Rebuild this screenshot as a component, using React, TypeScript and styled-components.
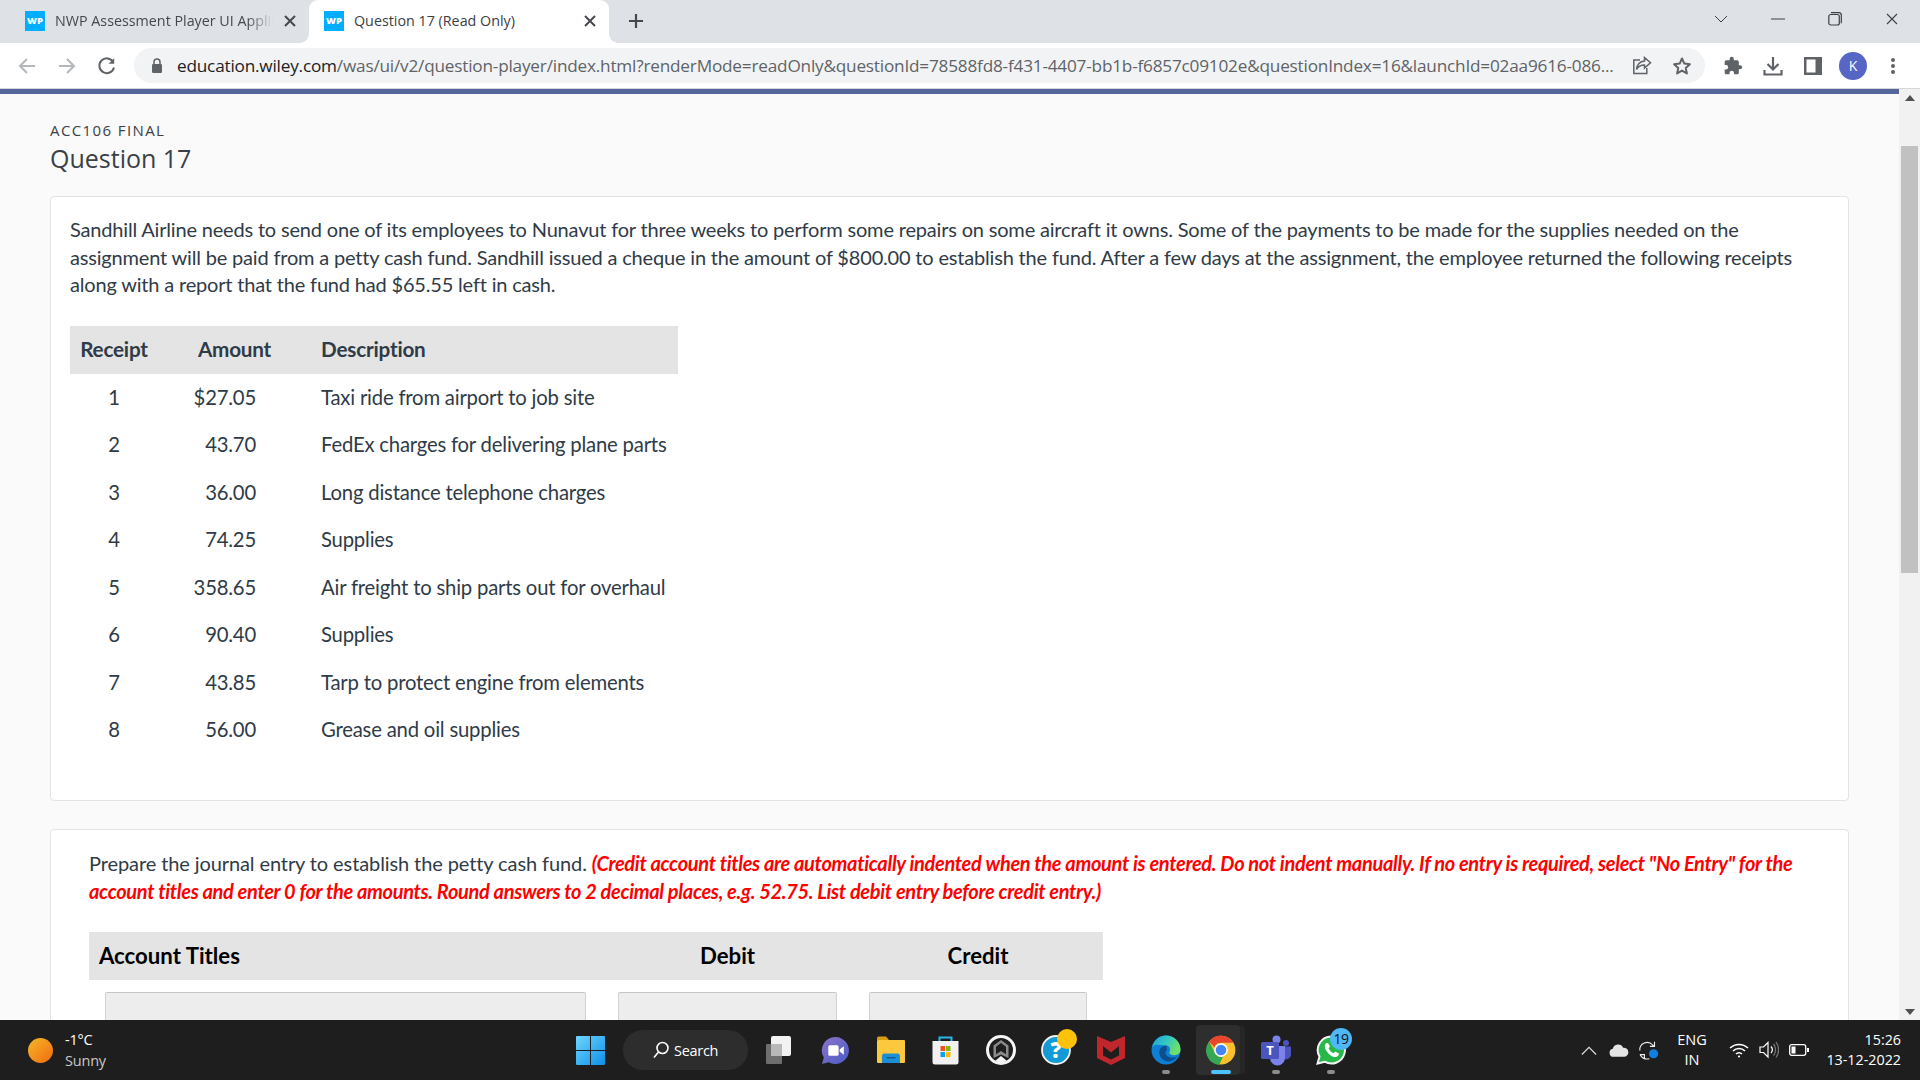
import React from "react";
import styled, { createGlobalStyle } from "styled-components";

const Global = createGlobalStyle`
  html, body { margin: 0; padding: 0; height: 100%; overflow: hidden; }
  #root { height: 100%; }
  * { box-sizing: border-box; }
`;

const Screen = styled.div`
  width: 1920px; height: 1080px; display: flex; flex-direction: column; overflow: hidden;
  font-family: "Lato", sans-serif; background: #fff;
`;

/* ---------- browser chrome ---------- */
const TabStrip = styled.div`
  height: 43px; flex: none; background: #dee1e6; display: flex; align-items: stretch; padding-left: 8px;
`;
const Tab = styled.div<{ $active?: boolean }>`
  width: ${p => (p.$active ? "300px" : "301px")}; flex: none; display: flex; align-items: center; position: relative;
  padding: 0 0 2px ${p => (p.$active ? "15px" : "17px")};
  background: ${p => (p.$active ? "#fff" : "transparent")};
  border-radius: 9px 9px 0 0;
  font: 14.3px "Open Sans", sans-serif; color: ${p => (p.$active ? "#3c4043" : "#45494d")};
  ${p => p.$active && `
    &::before, &::after {
      content: ""; position: absolute; bottom: 0; width: 9px; height: 9px;
    }
    &::before { left: -9px; background: radial-gradient(circle at 0 0, #dee1e6 8.5px, #fff 9px); }
    &::after { right: -9px; background: radial-gradient(circle at 100% 0, #dee1e6 8.5px, #fff 9px); }
  `}
`;
const Favicon = styled.span`
  width: 20px; height: 20px; background: #00aeff; color: #fff; flex: none;
  font: 800 9.5px/20px "Open Sans", sans-serif; text-align: center; margin-right: 10px;
`;
const TabTitle = styled.span`
  flex: 1; min-width: 0; white-space: nowrap; overflow: hidden;
`;
const FadedTitle = styled(TabTitle)`
  -webkit-mask-image: linear-gradient(to right, #000 88%, transparent 100%);
  mask-image: linear-gradient(to right, #000 88%, transparent 100%);
`;
const TabClose = styled.span`
  width: 14px; height: 14px; display: flex; margin-left: 10px; margin-right: 12px; color: #45494d; flex: none;
`;
const NewTab = styled.span`
  width: 20px; height: 20px; margin: 0 0 2px 17px; align-self: center; color: #45494d; display: flex;
`;
const WinControls = styled.div`
  margin-left: auto; align-self: flex-start; display: flex; align-items: center; height: 37px; color: #3c4043;
`;
const WinBtn = styled.span`
  width: 57px; display: flex; justify-content: center; align-items: center;
`;

const Toolbar = styled.div`
  height: 45px; flex: none; background: #fff; display: flex; align-items: center; padding-left: 17px;
`;
const NavBtn = styled.span<{ $w?: number }>`
  width: ${p => p.$w ?? 40}px; display: flex; align-items: center; justify-content: flex-start; flex: none;
`;
const Omnibox = styled.div`
  width: 1571px; height: 35px; border-radius: 18px; background: #f1f3f4; display: flex; align-items: center;
  padding-left: 17px; flex: none;
`;
const Url = styled.span`
  font: 17.2px "Open Sans", sans-serif; letter-spacing: -0.2px; color: #5f6368; white-space: nowrap; margin-left: 14px;
  width: 1445px; flex: none;
`;
const Domain = styled.span`
  color: #202124;
`;
const ToolIcons = styled.div`
  display: flex; align-items: center; margin-left: 8px;
`;
const ToolIcon = styled.span`
  width: 40px; display: flex; justify-content: center; align-items: center; flex: none;
`;
const Avatar = styled.span`
  width: 28px; height: 28px; border-radius: 50%; background: #5566c4; color: #fff; text-align: center;
  font: 14px/28px "Open Sans", sans-serif;
`;

/* ---------- page ---------- */
const Body = styled.div`
  flex: 1; min-height: 0; display: flex; border-top: 1px solid #d5d6d8; overflow: hidden;
`;
const Viewport = styled.div`
  flex: 1; min-width: 0; background: #fafafa; border-top: 5px solid #54669c; overflow: hidden; padding: 27px 50px 0;
`;
const Eyebrow = styled.div`
  font: 15px/18px "Open Sans", sans-serif; letter-spacing: 1.4px; color: #3a4048;
`;
const Heading = styled.h1`
  margin: 2px 0 0; font: 400 25px/34px "Open Sans", sans-serif; color: #3a4048;
`;
const Card = styled.section`
  background: #fff; border: 1px solid #e1e3e5; border-radius: 4px; margin-bottom: 28px;
`;
const StoryCard = styled(Card)`
  height: 605px; margin-top: 21px; padding: 19px 19px 0;
`;
const Para = styled.p`
  margin: 0; font: 400 20px/27.7px "Lato", sans-serif; letter-spacing: -0.18px; color: #2f3b47;
`;
const QuestionPara = styled(Para)`
  letter-spacing: -0.1px;
`;
const Red = styled.em`
  color: #f00; font-weight: 700; letter-spacing: -0.32px;
`;
const ReceiptTable = styled.table`
  border-collapse: collapse; margin-top: 27px; width: 608px; table-layout: fixed;
  font: 400 20.3px "Lato", sans-serif; letter-spacing: -0.2px; color: #2f3b47;
`;
const RH = styled.th<{ $w: number; $left?: boolean }>`
  width: ${p => p.$w}px; height: 48px; background: #e4e4e4; font-weight: 700; font-size: 20.7px; color: #2f3b47;
  text-align: ${p => (p.$left ? "left" : "center")}; padding: 0 0 2px ${p => (p.$left ? "10px" : "0")};
`;
const RC = styled.td`
  height: 47.5px; text-align: center; padding: 0 0 2px;
`;
const AC = styled.td`
  text-align: right; padding: 0 55px 2px 0;
`;
const DC = styled.td`
  text-align: left; padding: 0 0 2px 10px; white-space: nowrap;
`;
const EntryCard = styled(Card)`
  height: 400px; padding: 20px 38px 0;
`;
const EntryTable = styled.table`
  border-collapse: collapse; table-layout: fixed; width: 1014px; margin-top: 26.6px;
  font: 700 22.2px "Lato", sans-serif; color: #000;
`;
const EH = styled.th<{ $w: number; $left?: boolean }>`
  width: ${p => p.$w}px; height: 48px; background: #e4e4e4;
  text-align: ${p => (p.$left ? "left" : "center")}; padding: 0 0 2px ${p => (p.$left ? "10px" : "0")};
`;
const EC = styled.td`
  padding: 12px 16px;
`;
const Field = styled.div`
  height: 44px; background: #ededed; border: 1px solid #d2d2d2; border-top-color: #c6c6c6; border-radius: 2px;
`;

const Scrollbar = styled.div`
  width: 21px; flex: none; background: #f1f1f1; display: flex; flex-direction: column; align-items: center;
`;
const ScrollArrow = styled.span`
  height: 17px; flex: none; display: flex; align-items: center; justify-content: center;
`;
const ScrollTrack = styled.div`
  flex: 1; width: 100%; padding-top: 40px;
`;
const ScrollThumb = styled.div`
  height: 427px; background: #c1c1c1; margin: 0 2px;
`;

/* ---------- taskbar ---------- */
const Taskbar = styled.div`
  height: 60px; flex: none; background: #1e1e1e; display: flex; align-items: center; color: #fff;
`;
const Weather = styled.div`
  width: 576px; flex: none; display: flex; align-items: center; padding-left: 28px; font: 14.5px/21px "Open Sans", sans-serif;
`;
const Sun = styled.span`
  width: 25px; height: 25px; border-radius: 50%; background: linear-gradient(135deg, #f5b829, #f06a10); margin-right: 12px; flex: none;
`;
const WeatherText = styled.div`
  display: flex; flex-direction: column; letter-spacing: -0.2px; color: #c8c8c8;
`;
const Temp = styled.span`
  color: #fff;
`;
const SearchPill = styled.div`
  width: 125px; height: 40px; border-radius: 20px; background: #2d2d2d; margin: 0 5px 0 18px; display: flex; align-items: center;
  padding-left: 29px; gap: 4px; font: 14.5px "Open Sans", sans-serif; color: #fff; letter-spacing: -0.3px; flex: none;
`;
const TaskIcon = styled.span`
  width: 55px; height: 60px; display: flex; align-items: center; justify-content: center; position: relative; flex: none;
`;
const ChromeTile = styled(TaskIcon)`
  &::before {
    content: ""; position: absolute; left: 3px; top: 5px; width: 44px; height: 50px; background: #2e2e2e; border-radius: 4px;
    box-shadow: 6px 0 0 -1px #262626;
  }
  & > svg { position: relative; }
`;
const RunDot = styled.span<{ $active?: boolean }>`
  position: absolute; bottom: 6px; left: 50%; transform: translateX(-50%);
  width: ${p => (p.$active ? "20px" : "8px")}; height: 4px; border-radius: 2px;
  background: ${p => (p.$active ? "#4cc2ff" : "#8c8c8c")};
`;
const Badge = styled.span`
  position: absolute; top: 8px; right: 6px; width: 22px; height: 22px; border-radius: 50%; background: #4db8f5; color: #111;
  font: 14px/22px "Open Sans", sans-serif; text-align: center; letter-spacing: -0.5px;
`;
const Tray = styled.div`
  margin-left: auto; display: flex; align-items: center; height: 60px; padding-right: 19px;
`;
const TrayIcon = styled.span`
  width: 30px; display: flex; align-items: center; justify-content: center; flex: none;
`;
const Lang = styled.div`
  width: 52px; text-align: center; font: 14.5px/20.5px "Open Sans", sans-serif; color: #fff; margin: 0 6px 0 2px;
`;
const Clock = styled.div`
  margin-left: 11px; text-align: right; font: 14.3px/20.5px "Open Sans", sans-serif; color: #fff; width: 76px; white-space: nowrap;
`;

/* ---------- icons ---------- */
const X = ({ s = 14, w = 2 }: { s?: number; w?: number }) => (
  <svg width={s} height={s} viewBox="0 0 14 14" stroke="currentColor" strokeWidth={w} fill="none"><path d="M2 2l10 10M12 2L2 12" /></svg>
);
const gray = "#5f6368";

const Arrow = ({ flip }: { flip?: boolean }) => (
  <svg width="20" height="20" viewBox="0 0 20 20" fill="none" stroke="#b4b7bb" strokeWidth="2" transform={flip ? "scale(-1 1)" : undefined}>
    <path d="M18 10H3M10 3l-7 7 7 7" />
  </svg>
);
const Reload = () => (
  <svg width="20" height="20" viewBox="0 0 20 20" fill="none" stroke={gray} strokeWidth="2">
    <path d="M16.2 6A7.4 7.4 0 1 0 17 11.5" /><path d="M17.2 2.2v5.600h-5.600z" fill={gray} stroke="none" />
  </svg>
);
const LockIcon = () => (
  <svg width="12" height="16" viewBox="0 0 12 16" fill={gray}>
    <rect x="1" y="6" width="10" height="9" rx="1.2" /><path d="M3 6.500V4a3 3 0 0 1 6 0v2.500" fill="none" stroke={gray} strokeWidth="1.5" />
  </svg>
);
const ShareIcon = () => (
  <svg width="20" height="19" viewBox="0 0 20 19" fill="none" stroke={gray} strokeWidth="1.5">
    <path d="M8 4H1.800v13.500h13V12" /><path d="M12.500 1.500l6 5.200-6 5.300V9c-3.500 0-6 1-8 4.500C5 9 7.500 5.500 12.500 5z" />
  </svg>
);
const StarIcon = () => (
  <svg width="20" height="20" viewBox="0 0 20 20" fill="none" stroke={gray} strokeWidth="2" strokeLinejoin="round">
    <path d="M10 2.500l2.300 5.100 5.600.6-4.200 3.700 1.200 5.500-4.900-2.800-4.900 2.800 1.200-5.500L2.100 8.200l5.600-.6z" />
  </svg>
);
const Puzzle = () => (
  <svg width="20" height="20" viewBox="0 0 24 24" fill={gray}>
    <path d="M20.500 11H19V7a2 2 0 0 0-2-2h-4V3.500a2.500 2.500 0 0 0-5 0V5H4a2 2 0 0 0-2 2v3.800h1.500a2.700 2.700 0 0 1 0 5.400H2V20a2 2 0 0 0 2 2h3.800v-1.500a2.700 2.700 0 0 1 5.400 0V22H17a2 2 0 0 0 2-2v-4h1.500a2.500 2.500 0 0 0 0-5z" />
  </svg>
);
const Download = () => (
  <svg width="20" height="20" viewBox="0 0 20 20" fill="none" stroke={gray} strokeWidth="2.2">
    <path d="M10 1v12M4.500 8l5.500 5.500L15.500 8" /><path d="M1.500 14v4.500h17V14" />
  </svg>
);
const SidePanel = () => (
  <svg width="18" height="18" viewBox="0 0 18 18"><rect width="18" height="18" fill={gray} /><rect x="2.500" y="2.500" width="9" height="13" fill="#fff" /></svg>
);
const Kebab = () => (
  <svg width="6" height="18" viewBox="0 0 6 18" fill={gray}><circle cx="3" cy="3" r="2" /><circle cx="3" cy="9" r="2" /><circle cx="3" cy="15" r="2" /></svg>
);

const WinLogo = () => (
  <svg width="29" height="29" viewBox="0 0 29 29">
    <defs><linearGradient id="wl" x1="0" y1="0" x2="1" y2="1"><stop offset="0" stopColor="#6fd6ff" /><stop offset="1" stopColor="#0d8fe8" /></linearGradient></defs>
    <path d="M0 1a1 1 0 0 1 1-1h13v14H0zM15 0h13a1 1 0 0 1 1 1v13H15zM0 15h14v14H1a1 1 0 0 1-1-1zM15 15h14v13a1 1 0 0 1-1 1H15z" fill="url(#wl)" />
  </svg>
);
const SearchGlyph = () => (
  <svg width="18" height="18" viewBox="0 0 18 18" fill="none" stroke="#fff" strokeWidth="1.6"><circle cx="10.500" cy="7" r="5.500" /><path d="M6.500 11l-4.500 5.500" /></svg>
);
const TaskView = () => (
  <svg width="30" height="29" viewBox="0 0 30 29"><rect x="0" y="8" width="16" height="20" fill="#6e6e6e" rx="1" /><rect x="5" y="0" width="20" height="20" rx="2" fill="#f2f2f2" /><rect x="5" y="8" width="11" height="12" fill="#b8b8b8" /></svg>
);
const Chat = () => (
  <svg width="29" height="29" viewBox="0 0 28 28">
    <defs><linearGradient id="ch" x1="0" y1="0" x2="1" y2="1"><stop offset="0" stopColor="#8c74c9" /><stop offset="1" stopColor="#4a5bc4" /></linearGradient></defs>
    <path d="M14 1a13 13 0 1 1-6.500 24.300L1 27l1.700-6.300A13 13 0 0 1 14 1z" fill="url(#ch)" />
    <rect x="7" y="9" width="10" height="10" rx="1.5" fill="#fff" /><path d="M18 13l4-3v8l-4-3z" fill="#fff" />
  </svg>
);
const Folder = () => (
  <svg width="30" height="28" viewBox="0 0 30 28">
    <path d="M1 2a1.500 1.500 0 0 1 1.500-1.500H10l3 3.500H1z" fill="#d79e14" /><rect x="1" y="4" width="28" height="23" rx="1" fill="#fcc83e" />
    <path d="M6 27v-7a2.500 2.500 0 0 1 2.500-2.500h13A2.500 2.500 0 0 1 24 20v7z" fill="#1a8fd6" /><rect x="10.500" y="21" width="9" height="1.500" fill="#0c5d95" />
  </svg>
);
const Store = () => (
  <svg width="29" height="30" viewBox="0 0 28 30">
    <path d="M8 6V2.500h12V6" fill="none" stroke="#2bb6e8" strokeWidth="2" />
    <path d="M1 6h26v21a2.500 2.500 0 0 1-2.500 2.500h-21A2.500 2.500 0 0 1 1 27z" fill="#f1f1f1" />
    <rect x="9" y="11" width="4.500" height="5" fill="#f25022" /><rect x="14.500" y="11" width="4.500" height="5" fill="#7fba00" />
    <rect x="9" y="17" width="4.500" height="5" fill="#00a4ef" /><rect x="14.500" y="17" width="4.500" height="5" fill="#ffb900" />
  </svg>
);
const Arch = () => (
  <svg width="30" height="30" viewBox="0 0 30 30">
    <circle cx="15" cy="15" r="13.500" fill="#1e1e1e" stroke="#f5f5f5" strokeWidth="3" />
    <path d="M7.500 10.500L15 5l7.500 5.500v12.500L15 19.500 7.500 23z" fill="#8a8a8a" />
    <path d="M10 11.800L15 8l5 3.800v7.400L15 16l-5 3.200z" fill="#1e1e1e" />
    <path d="M9 26l6-5 6 5-6 2z" fill="#f5f5f5" />
  </svg>
);
const Help = () => (
  <svg width="42" height="42" viewBox="0 0 42 42">
    <circle cx="21" cy="21" r="14" fill="#129ad6" stroke="#f3f3f3" strokeWidth="1.800" />
    <text x="21" y="29" textAnchor="middle" fontFamily="Open Sans" fontWeight="800" fontSize="22" fill="#fff">?</text>
    <circle cx="32" cy="10" r="10" fill="#fdc20a" />
  </svg>
);
const McAfee = () => (
  <svg width="28" height="30" viewBox="0 0 28 30">
    <path d="M0 1l14 6 14-6v22l-14 7-14-7z" fill="#c0272d" /><path d="M6 11l8 6.500 8-6.500v9.500L14 24.500 6 20.500z" fill="#1e1e1e" />
  </svg>
);
const Edge = () => (
  <svg width="30" height="30" viewBox="0 0 29 29">
    <defs>
      <linearGradient id="eg" x1="0" y1="0" x2="1" y2=".5"><stop offset="0" stopColor="#1aa0e0" /><stop offset=".55" stopColor="#36c8c0" /><stop offset="1" stopColor="#6fe264" /></linearGradient>
    </defs>
    <circle cx="14.500" cy="14.500" r="14" fill="#0e7fd3" />
    <path d="M1 12C3 4 9 .5 14.500 .5 22 .5 28.500 6 28.500 14c0 3-2 5.500-6 5.500-3 0-5-1-5-2.500 2-2 1-7-3.500-7C8 10 4 8 1 12z" fill="url(#eg)" />
    <path d="M14.500 10.500c-4 0-6.500 3-6.500 6.500 0 5 5 9.500 10 8.500 3.500-.7 6-2.500 8-5.500-2 1.500-5 2.500-8 1.500-3-1-4.500-3-4-5 .3-1 .8-1.500 1.500-2-.5-2.500-.5-4-1-4.500z" fill="#0b4f8e" />
  </svg>
);
const ChromeLogo = () => (
  <svg width="30" height="30" viewBox="0 0 48 48">
    <circle cx="24" cy="24" r="23" fill="#fbc02d" />
    <path d="M24 1a23 23 0 0 1 19.900 11.500H24a11.500 11.500 0 0 0-10.500 7L5.200 10.600A23 23 0 0 1 24 1z" fill="#e8452c" />
    <path d="M5.200 10.600l9.600 19A11.500 11.500 0 0 0 27 35l-6 12.800A23 23 0 0 1 5.200 10.600z" fill="#34a853" />
    <circle cx="24" cy="24" r="11" fill="#fff" /><circle cx="24" cy="24" r="8.500" fill="#4285f4" />
  </svg>
);
const Teams = () => (
  <svg width="30" height="31" viewBox="0 0 30 31">
    <circle cx="25" cy="8" r="3" fill="#4b53bc" /><circle cx="15.500" cy="4.500" r="4" fill="#7b83eb" />
    <path d="M20 11.500h10v8a5 5 0 0 1-7 4.500z" fill="#4b53bc" /><path d="M9 11h15v12a7.500 7.500 0 0 1-15 0z" fill="#7b83eb" />
    <rect x="0" y="7" width="18" height="17" rx="1.500" fill="#4c54bd" />
    <text x="9" y="20" textAnchor="middle" fontFamily="Open Sans" fontWeight="700" fontSize="13" fill="#fff">T</text>
  </svg>
);
const WhatsApp = () => (
  <svg width="30" height="30" viewBox="0 0 30 30">
    <path d="M15.500 1.500a13.500 13.500 0 1 1-6.800 25.200L1.500 28.500l2-6.900A13.500 13.500 0 0 1 15.500 1.500z" fill="#26b94a" stroke="#f3f3f3" strokeWidth="2" />
    <path d="M10.500 8c-2 1.500-2.500 4 0 8s6.500 6.500 9.500 6c1.800-.3 3-2 3-3.500l-3.800-2-1.700 1.700c-2-.7-4-2.800-5-5l1.500-1.700L12 8z" fill="#fff" />
  </svg>
);
const Cloud = () => (
  <svg width="20" height="13" viewBox="0 0 22 14" fill="#e4e4e4"><path d="M5 14a4.500 4.500 0 0 1-.8-8.900A6 6 0 0 1 15.500 4 5 5 0 0 1 17 14z" /></svg>
);
const Sync = () => (
  <svg width="22" height="21" viewBox="0 0 24 22" fill="none" stroke="#eee" strokeWidth="1.200">
    <path d="M2 11a8 8 0 0 1 14-6l1.500 1.500M18 1.500v5h-5" /><path d="M2 15.500h5v5M2.500 16c2 3 6 5 10 4" />
    <circle cx="17" cy="14.500" r="5" fill="#0f7fe6" stroke="none" />
  </svg>
);
const Caret = () => (
  <svg width="16" height="9" viewBox="0 0 18 10" fill="none" stroke="#ddd" strokeWidth="1.300"><path d="M1 9.500L9 1.500l8 8" /></svg>
);
const Wifi = () => (
  <svg width="20" height="16" viewBox="0 0 20 16" fill="none" stroke="#fff" strokeWidth="1.500">
    <path d="M1 6a13 13 0 0 1 18 0M4 9a8.500 8.500 0 0 1 12 0M7 12a4 4 0 0 1 6 0" /><circle cx="10" cy="14.500" r="1.100" fill="#fff" stroke="none" />
  </svg>
);
const Volume = () => (
  <svg width="20" height="18" viewBox="0 0 20 18" fill="none" stroke="#fff" strokeWidth="1.200">
    <path d="M1 6v5.500h3.500L9 16V1.500L4.500 6z" /><path d="M12 5.500a5 5 0 0 1 0 6.500" /><path d="M14.500 3a9 9 0 0 1 0 11.500M17 1a13 13 0 0 1 0 15.500" stroke="#777" />
  </svg>
);
const Battery = () => (
  <svg width="20" height="12" viewBox="0 0 20 12" fill="none"><rect x=".7" y=".7" width="16" height="10.600" rx="2" stroke="#fff" strokeWidth="1.300" /><rect x="2.500" y="2.500" width="4" height="7" fill="#fff" /><rect x="18" y="4" width="2" height="4" fill="#fff" /></svg>
);

const receipts: [number, string, string][] = [
  [1, "$27.05", "Taxi ride from airport to job site"],
  [2, "43.70", "FedEx charges for delivering plane parts"],
  [3, "36.00", "Long distance telephone charges"],
  [4, "74.25", "Supplies"],
  [5, "358.65", "Air freight to ship parts out for overhaul"],
  [6, "90.40", "Supplies"],
  [7, "43.85", "Tarp to protect engine from elements"],
  [8, "56.00", "Grease and oil supplies"],
];

export default function App() {
  return (
    <Screen>
      <Global />
      <TabStrip>
        <Tab>
          <Favicon>WP</Favicon>
          <FadedTitle>NWP Assessment Player UI Application</FadedTitle>
          <TabClose><X /></TabClose>
        </Tab>
        <Tab $active>
          <Favicon>WP</Favicon>
          <TabTitle>Question 17 (Read Only)</TabTitle>
          <TabClose><X /></TabClose>
        </Tab>
        <NewTab>
          <svg width="20" height="20" viewBox="0 0 20 20" stroke="currentColor" strokeWidth="2.200"><path d="M10 3v14M3 10h14" /></svg>
        </NewTab>
        <WinControls>
          <WinBtn><svg width="14" height="8" viewBox="0 0 14 8" fill="none" stroke="currentColor"><path d="M1 1l6 6 6-6" /></svg></WinBtn>
          <WinBtn><svg width="14" height="2" viewBox="0 0 14 2" stroke="currentColor"><path d="M0 1h14" /></svg></WinBtn>
          <WinBtn><svg width="14" height="14" viewBox="0 0 14 14" fill="none" stroke="currentColor" strokeWidth="1.200"><rect x=".8" y="2.500" width="10.500" height="10.500" rx="2" /><path d="M3 .7h8a2.500 2.500 0 0 1 2.300 2.500v8" /></svg></WinBtn>
          <WinBtn><X s={14} w={1.100} /></WinBtn>
        </WinControls>
      </TabStrip>
      <Toolbar>
        <NavBtn><Arrow /></NavBtn>
        <NavBtn><Arrow flip /></NavBtn>
        <NavBtn $w={37}><Reload /></NavBtn>
        <Omnibox>
          <LockIcon />
          <Url><Domain>education.wiley.com</Domain>/was/ui/v2/question-player/index.html?renderMode=readOnly&amp;questionId=78588fd8-f431-4407-bb1b-f6857c09102e&amp;questionIndex=16&amp;launchId=02aa9616-086...</Url>
          <ToolIcon><ShareIcon /></ToolIcon>
          <ToolIcon><StarIcon /></ToolIcon>
        </Omnibox>
        <ToolIcons>
          <ToolIcon><Puzzle /></ToolIcon>
          <ToolIcon><Download /></ToolIcon>
          <ToolIcon><SidePanel /></ToolIcon>
          <ToolIcon><Avatar>K</Avatar></ToolIcon>
          <ToolIcon><Kebab /></ToolIcon>
        </ToolIcons>
      </Toolbar>
      <Body>
        <Viewport>
          <Eyebrow>ACC106 FINAL</Eyebrow>
          <Heading>Question 17</Heading>
          <StoryCard>
            <Para>
              Sandhill Airline needs to send one of its employees to Nunavut for three weeks to perform some repairs on some aircraft it owns. Some of the payments to be made for the supplies needed on the assignment will be paid from a petty cash fund. Sandhill issued a cheque in the amount of $800.00 to establish the fund. After a few days at the assignment, the employee returned the following receipts along with a report that the fund had $65.55 left in cash.
            </Para>
            <ReceiptTable>
              <thead>
                <tr><RH $w={88}>Receipt</RH><RH $w={153}>Amount</RH><RH $w={367} $left>Description</RH></tr>
              </thead>
              <tbody>
                {receipts.map(([n, a, d]) => (
                  <tr key={n}><RC>{n}</RC><AC>{a}</AC><DC>{d}</DC></tr>
                ))}
              </tbody>
            </ReceiptTable>
          </StoryCard>
          <EntryCard>
            <QuestionPara>
              Prepare the journal entry to establish the petty cash fund. <Red>(Credit account titles are automatically indented when the amount is entered. Do not indent manually. If no entry is required, select "No Entry" for the account titles and enter 0 for the amounts. Round answers to 2 decimal places, e.g. 52.75. List debit entry before credit entry.)</Red>
            </QuestionPara>
            <EntryTable>
              <thead>
                <tr><EH $w={513} $left>Account Titles</EH><EH $w={251}>Debit</EH><EH $w={250}>Credit</EH></tr>
              </thead>
              <tbody>
                <tr><EC><Field /></EC><EC><Field /></EC><EC><Field /></EC></tr>
              </tbody>
            </EntryTable>
          </EntryCard>
        </Viewport>
        <Scrollbar>
          <ScrollArrow><svg width="10" height="6" viewBox="0 0 10 6" fill="#505050"><path d="M5 0l5 6H0z" /></svg></ScrollArrow>
          <ScrollTrack><ScrollThumb /></ScrollTrack>
          <ScrollArrow><svg width="10" height="6" viewBox="0 0 10 6" fill="#505050"><path d="M5 6L0 0h10z" /></svg></ScrollArrow>
        </Scrollbar>
      </Body>
      <Taskbar>
        <Weather>
          <Sun />
          <WeatherText><Temp>-1°C</Temp><span>Sunny</span></WeatherText>
        </Weather>
        <WinLogo />
        <SearchPill><SearchGlyph />Search</SearchPill>
        <TaskIcon><TaskView /></TaskIcon>
        <TaskIcon><Chat /></TaskIcon>
        <TaskIcon><Folder /></TaskIcon>
        <TaskIcon><Store /></TaskIcon>
        <TaskIcon><Arch /></TaskIcon>
        <TaskIcon><Help /></TaskIcon>
        <TaskIcon><McAfee /></TaskIcon>
        <TaskIcon><Edge /><RunDot /></TaskIcon>
        <ChromeTile><ChromeLogo /><RunDot $active /></ChromeTile>
        <TaskIcon><Teams /><RunDot /></TaskIcon>
        <TaskIcon><WhatsApp /><Badge>19</Badge><RunDot /></TaskIcon>
        <Tray>
          <TrayIcon><Caret /></TrayIcon>
          <TrayIcon><Cloud /></TrayIcon>
          <TrayIcon><Sync /></TrayIcon>
          <Lang>ENG<br />IN</Lang>
          <TrayIcon><Wifi /></TrayIcon>
          <TrayIcon><Volume /></TrayIcon>
          <TrayIcon><Battery /></TrayIcon>
          <Clock>15:26<br />13-12-2022</Clock>
        </Tray>
      </Taskbar>
    </Screen>
  );
}
